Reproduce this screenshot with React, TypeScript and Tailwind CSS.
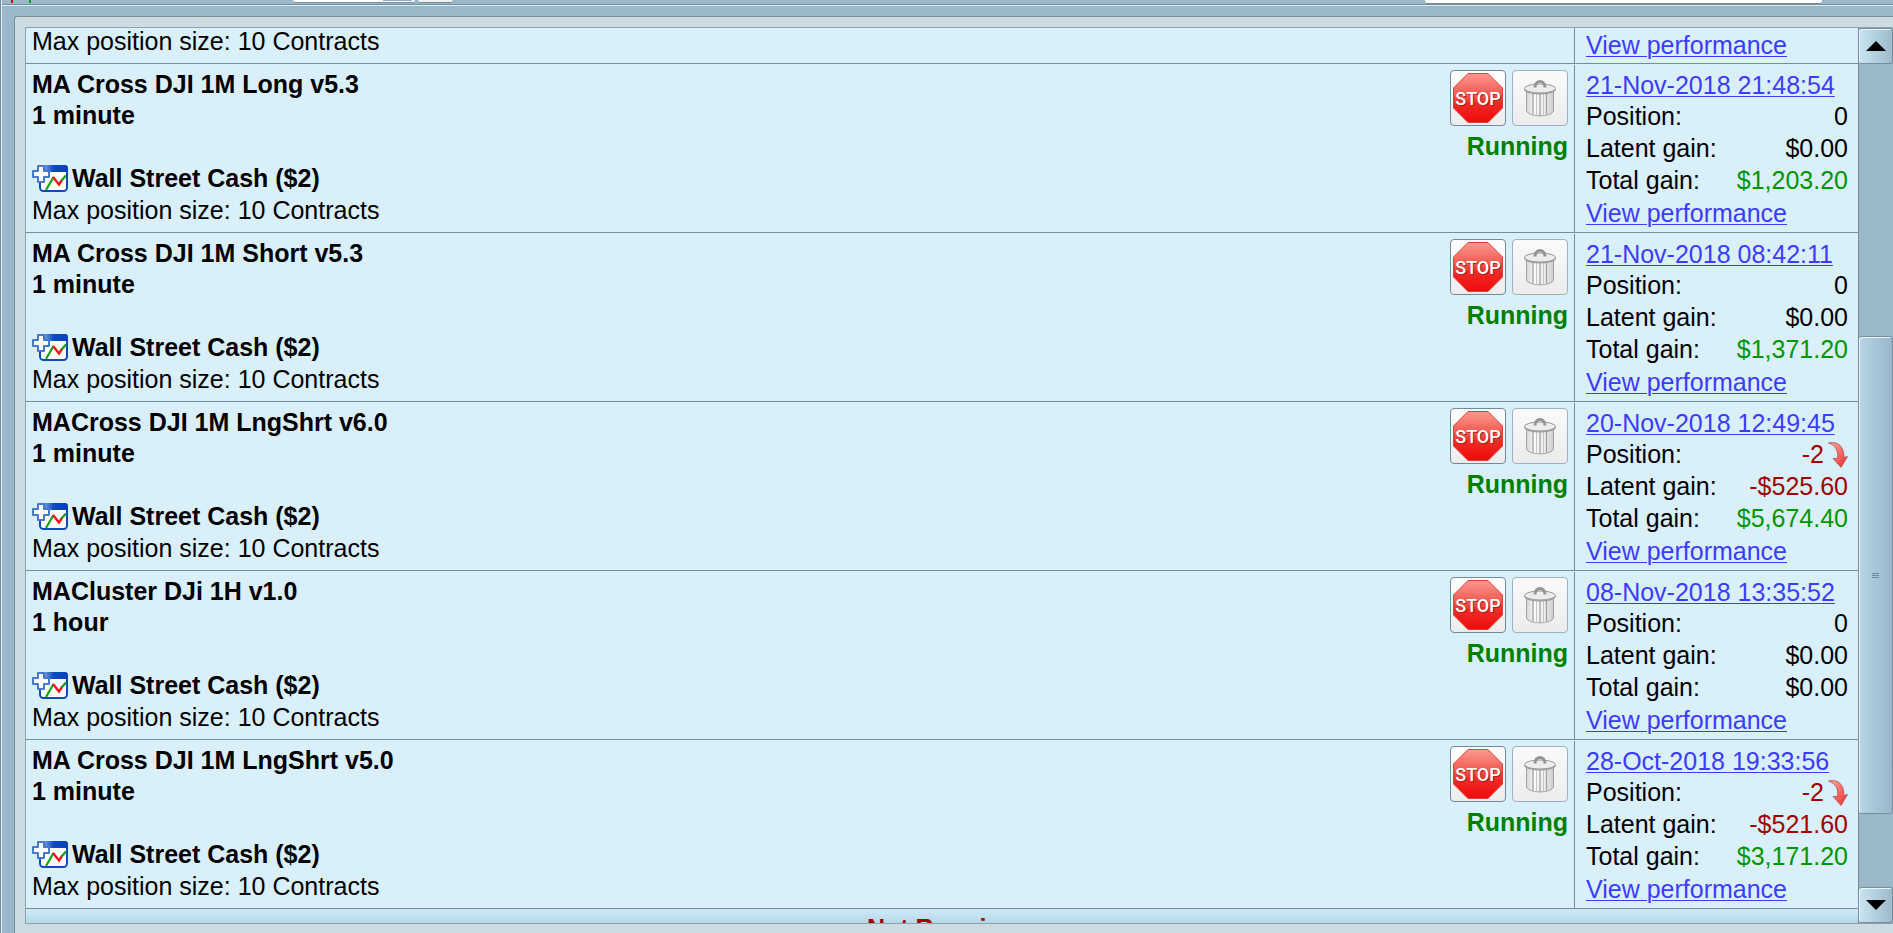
import clsx from 'clsx';

type Strategy = {
  name: string;
  timeframe: string;
  market: string;
  maxSize: string;
  started: string;
  position: string;
  latent: string;
  total: string;
};

const strategies: Strategy[] = [
  { name: 'MA Cross DJI 1M Long v5.3', timeframe: '1 minute', market: 'Wall Street Cash ($2)', maxSize: '10 Contracts', started: '21-Nov-2018 21:48:54', position: '0', latent: '$0.00', total: '$1,203.20' },
  { name: 'MA Cross DJI 1M Short v5.3', timeframe: '1 minute', market: 'Wall Street Cash ($2)', maxSize: '10 Contracts', started: '21-Nov-2018 08:42:11', position: '0', latent: '$0.00', total: '$1,371.20' },
  { name: 'MACross DJI 1M LngShrt v6.0', timeframe: '1 minute', market: 'Wall Street Cash ($2)', maxSize: '10 Contracts', started: '20-Nov-2018 12:49:45', position: '-2', latent: '-$525.60', total: '$5,674.40' },
  { name: 'MACluster DJi 1H v1.0', timeframe: '1 hour', market: 'Wall Street Cash ($2)', maxSize: '10 Contracts', started: '08-Nov-2018 13:35:52', position: '0', latent: '$0.00', total: '$0.00' },
  { name: 'MA Cross DJI 1M LngShrt v5.0', timeframe: '1 minute', market: 'Wall Street Cash ($2)', maxSize: '10 Contracts', started: '28-Oct-2018 19:33:56', position: '-2', latent: '-$521.60', total: '$3,171.20' },
];

function amountColor(value: string) {
  if (value.startsWith('-')) return 'text-[#a00000]';
  return /[1-9]/.test(value) ? 'text-[#009600]' : 'text-black';
}

function ChartIcon() {
  return (
    <svg width="36" height="27" viewBox="0 0 36 27" aria-hidden="true" className="shrink-0">
      <defs>
        <linearGradient id="chart-bar" x1="0" x2="1" y1="0" y2="0">
          <stop offset="0.15" stopColor="#7fa3dc" />
          <stop offset="0.5" stopColor="#0b4cc0" />
          <stop offset="1" stopColor="#0742b4" />
        </linearGradient>
      </defs>
      <rect x="8" y="1" width="27" height="25" rx="3.5" fill="#fff" stroke="#0f4bb8" strokeWidth="2" />
      <path d="M7 7V3a3 3 0 0 1 3-3h23a3 3 0 0 1 3 3v4Z" fill="url(#chart-bar)" />
      <path d="M14 25 21.500 12" fill="none" stroke="#0fa31b" strokeWidth="2.2" />
      <path d="m21 12 6 7.500 3-4.500" fill="none" stroke="#f0141e" strokeWidth="2.4" />
      <path d="m29.500 15.500 4.500-5" fill="none" stroke="#0fa31b" strokeWidth="2.4" />
      <path d="M6 1h6v5h5v6h-5v5H6v-5H1V6h5Z" fill="#fff" stroke="#4878cc" strokeWidth="2" strokeLinejoin="round" />
    </svg>
  );
}

function StopIcon() {
  return (
    <svg width="50" height="50" viewBox="0 0 50 50" aria-hidden="true">
      <defs>
        <linearGradient id="stop-fill" x1="0" x2="0" y1="0" y2="1">
          <stop offset="0" stopColor="#fb9a90" />
          <stop offset="0.45" stopColor="#f2564e" />
          <stop offset="0.6" stopColor="#ee2b26" />
          <stop offset="1" stopColor="#f00a0a" />
        </linearGradient>
      </defs>
      <path d="M15 .5h20L49.500 15v20L35 49.500H15L.5 35V15Z" fill="url(#stop-fill)" stroke="#e0403c" />
      <g fontFamily="Roboto, 'Liberation Sans', sans-serif" fontSize="18" fontWeight="500" textAnchor="middle">
        <text x="26" y="33" fill="#a32420">STOP</text>
        <text x="25" y="32" fill="#fff">STOP</text>
      </g>
    </svg>
  );
}

function TrashIcon() {
  return (
    <svg width="32" height="37" viewBox="0 0 32 37" aria-hidden="true">
      <defs>
        <linearGradient id="bin-fill" x1="0" x2="1" y1="0" y2="0">
          <stop offset="0" stopColor="#d4d4d4" />
          <stop offset="0.3" stopColor="#fafafa" />
          <stop offset="0.7" stopColor="#ebebeb" />
          <stop offset="1" stopColor="#cccccc" />
        </linearGradient>
      </defs>
      <path d="M2.500 11v20c2 6.500 25 6.500 27 0V11Z" fill="url(#bin-fill)" stroke="#a3a3a3" />
      <path d="M9 14v20.500M16 14v22M22.500 14v20.500" stroke="#a0a0a0" strokeWidth="1.3" />
      <path d="M12.500 14v21.500M19.500 14v21.500" stroke="#c4c4c4" />
      <ellipse cx="16" cy="9.500" rx="15.500" ry="4.500" fill="#b9b9b9" stroke="#999" />
      <ellipse cx="16" cy="8.500" rx="15.500" ry="4.500" fill="#ededed" stroke="#999" />
      <path d="M11 7.500c0-8 10-8 10 0" fill="none" stroke="#949494" strokeWidth="3" />
    </svg>
  );
}

function ShortArrow() {
  return (
    <svg width="20" height="26" viewBox="0 0 20 26" aria-label="short" className="ml-[4px]">
      <defs>
        <linearGradient id="short-fill" x1="0" x2="1" y1="0" y2="1">
          <stop offset="0" stopColor="#ffb0a8" />
          <stop offset="1" stopColor="#f02828" />
        </linearGradient>
      </defs>
      <path d="M.5 1C10-1 16 4 16 15.500l3.500-1L13 25.500 5 16.500h4.500C10.500 9 8 3.500.5 1Z" fill="url(#short-fill)" stroke="#a8524f" strokeWidth=".8" />
    </svg>
  );
}

function Stat({ label, value, lineClass }: { label: string; value: string; lineClass: string }) {
  return (
    <div className={clsx('flex justify-between', lineClass)}>
      <dt>{label}</dt>
      <dd className={clsx('flex items-center', amountColor(value))}>
        {value}
        {label === 'Position:' && value.startsWith('-') && <ShortArrow />}
      </dd>
    </div>
  );
}

function PerformanceLink() {
  return (
    <a href="#performance" className="text-[#3c3cff] underline decoration-1 underline-offset-2">
      View performance
    </a>
  );
}

function StrategyRow({ item }: { item: Strategy }) {
  return (
    <li className="flex h-[169px] shrink-0 border-b border-[#758e9a]">
      <div className="flex flex-1 justify-between pl-[6px] pr-[6px]">
        <div className="pt-[5px]">
          <h2 className="font-bold leading-[31px]">{item.name}</h2>
          <p className="font-bold leading-[31px]">{item.timeframe}</p>
          <p className="mt-[31px] flex items-center gap-1 font-bold leading-[32px]">
            <ChartIcon />
            {item.market}
          </p>
          <p className="leading-[32px]">Max position size: {item.maxSize}</p>
        </div>
        <div className="flex flex-col items-end pt-[6px]">
          <div className="flex gap-[6px]">
            <button type="button" aria-label="Stop" className="flex size-14 items-center justify-center rounded-[4px] border border-[#718a99] bg-linear-to-b from-white to-[#ececec]">
              <StopIcon />
            </button>
            <button type="button" aria-label="Delete" className="flex size-14 items-center justify-center rounded-[4px] border border-[#9fb1bc] bg-linear-to-b from-[#fafafa] to-[#ececec]">
              <TrashIcon />
            </button>
          </div>
          <p className="mt-1 font-bold leading-[32px] text-[#008000]">Running</p>
        </div>
      </div>
      <div className="mt-px w-[284px] border-l border-[#758e9a] pl-[11px] pr-[10px] pt-[5px]">
        <div className="leading-[31px]">
          <a href="#started" className="text-[#3c3cff] underline decoration-1 underline-offset-2">
            {item.started}
          </a>
        </div>
        <dl>
          <Stat label="Position:" value={item.position} lineClass="leading-[31px]" />
          <Stat label="Latent gain:" value={item.latent} lineClass="leading-[32px]" />
          <Stat label="Total gain:" value={item.total} lineClass="leading-[32px]" />
        </dl>
        <div className="leading-[34px]">
          <PerformanceLink />
        </div>
      </div>
    </li>
  );
}

function ScrollBar() {
  return (
    <div className="flex w-[35px] flex-col border-l border-[#758e9a] bg-[#9bb8c9]">
      <button type="button" aria-label="Scroll up" className="flex h-[36px] shrink-0 items-center justify-center rounded-[3px] border border-l-0 border-[#758e9a] bg-linear-to-r from-[#c9e5f2] to-[#9dbbcb] shadow-[inset_1px_1px_0_#e8f6fc]">
        <svg width="20" height="10" viewBox="0 0 20 10" aria-hidden="true">
          <path d="M10 0 20 10H0Z" />
        </svg>
      </button>
      <div className="flex flex-1 flex-col">
        <div className="flex-[273]" />
        <div className="flex flex-[477] items-center justify-center rounded-[3px] border border-l-0 border-[#758e9a] bg-linear-to-r from-[#b9d6e5] to-[#97b6c8] shadow-[inset_1px_1px_0_#e8f6fc]">
          <div className="flex w-[7px] flex-col gap-px">
            <span className="h-px bg-[#6d8896]" />
            <span className="h-px bg-[#6d8896]" />
            <span className="h-px bg-[#6d8896]" />
          </div>
        </div>
        <div className="flex-[73]" />
      </div>
      <button type="button" aria-label="Scroll down" className="flex h-[36px] shrink-0 items-center justify-center rounded-[3px] border border-l-0 border-[#758e9a] bg-linear-to-r from-[#c9e5f2] to-[#9dbbcb] shadow-[inset_1px_1px_0_#e8f6fc]">
        <svg width="20" height="10" viewBox="0 0 20 10" aria-hidden="true">
          <path d="M0 0h20L10 10Z" />
        </svg>
      </button>
    </div>
  );
}

function Toolbar() {
  return (
    <div className="flex h-[4px] shrink-0 items-start">
      <span className="ml-[9px] h-[3px] w-[2px] bg-[#b01818]" />
      <span className="ml-[16px] h-[3px] w-[2px] bg-[#109818]" />
      <div className="ml-[262px] flex h-[3px] w-[122px] justify-end rounded-b-[3px] border-b border-[#758e9a] bg-white pr-[3px]">
        <span className="h-px w-[29px] bg-[#8fb0c4]" />
      </div>
      <div className="ml-[3px] h-[3px] w-[35px] rounded-b-[3px] border-b border-[#758e9a] bg-[#f0f0f0]" />
      <div className="ml-auto mr-[71px] h-[4px] w-[397px] rounded-b-[3px] border-b border-[#758e9a] bg-white" />
    </div>
  );
}

export default function App() {
  return (
    <div className="flex h-screen overflow-hidden border-l border-[#758e9a] bg-[#9bb8c9] font-['Liberation_Sans',Arial,sans-serif] text-[25px] text-black">
      <div className="flex min-w-0 flex-1 flex-col border-l border-[#dceef6]">
        <Toolbar />
        <div className="h-[2px] shrink-0 border-b border-t border-b-[#dceef6] border-t-[#758e9a]" />
        <main className="ml-[12px] mt-[10px] flex min-h-0 flex-1 rounded-tl-[3px] border-l border-t border-[#758e9a] bg-[#cddbe2] pb-[9px] pl-[10px] pt-[10px]">
          <div className="flex min-w-0 flex-1 border-b border-l border-t border-[#8ba3ae]">
            <ul className="flex min-w-0 flex-1 flex-col overflow-hidden bg-[#d9effa]">
              <li className="flex h-[36px] shrink-0 overflow-hidden border-b border-[#758e9a]">
                <div className="flex flex-1 items-end pb-[6px] pl-[6px]">
                  <p className="leading-[32px]">Max position size: 10 Contracts</p>
                </div>
                <div className="w-[284px] border-l border-[#758e9a] pl-[11px] leading-[34px]">
                  <PerformanceLink />
                </div>
              </li>
              {strategies.map((item) => (
                <StrategyRow key={item.name} item={item} />
              ))}
              <li className="min-h-0 flex-1 bg-linear-to-b from-[#cfeaf7] to-[#b5d8e8] pt-[3px] text-center font-bold leading-[32px] text-[#a00000]">
                Not Running
              </li>
            </ul>
            <ScrollBar />
          </div>
        </main>
      </div>
    </div>
  );
}
